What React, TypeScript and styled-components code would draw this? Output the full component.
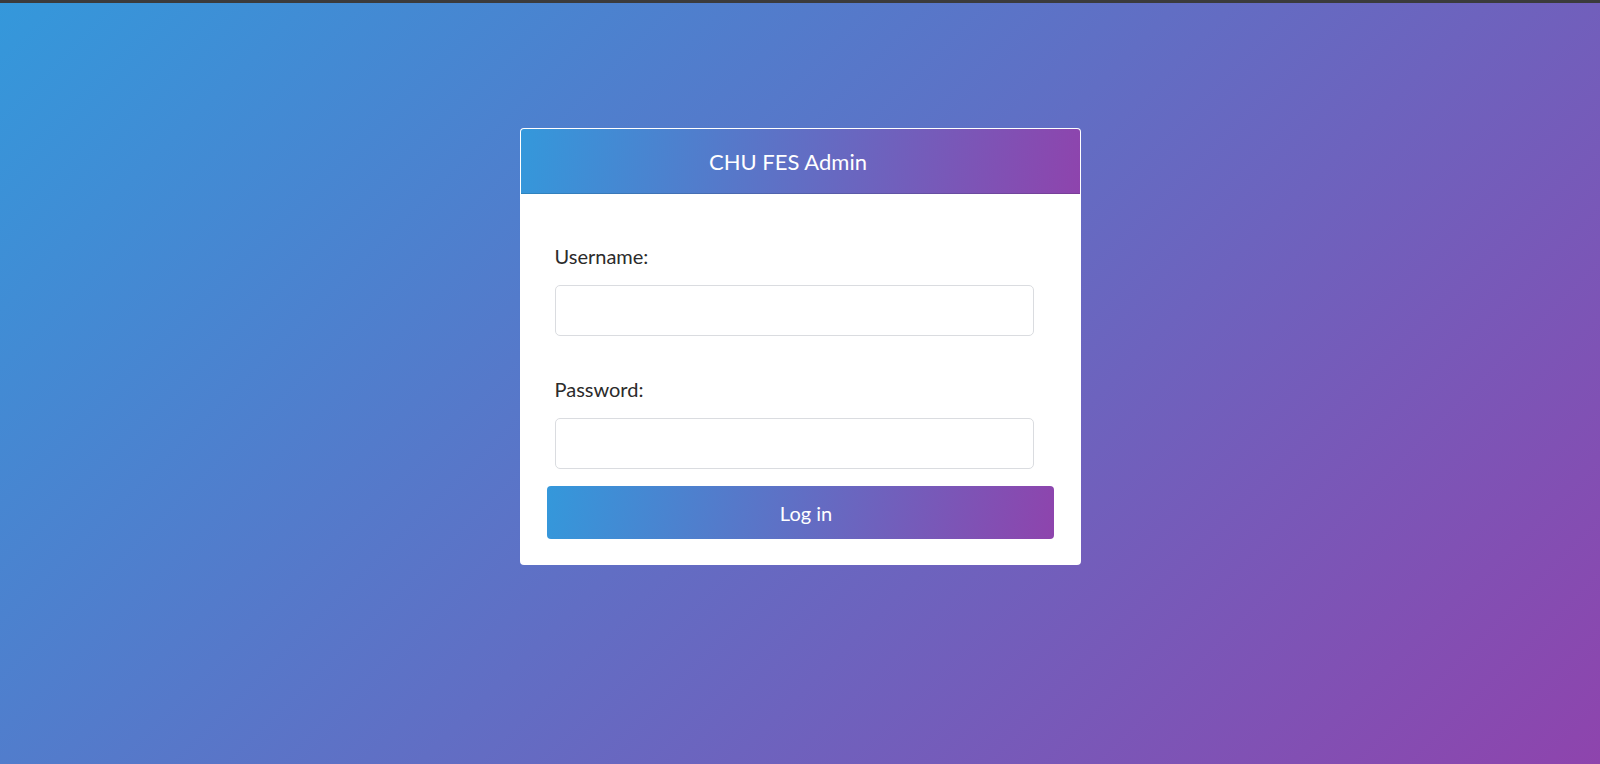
import React, { FC, useState } from 'react';
import styled, { createGlobalStyle } from 'styled-components';

const color = {
    blue: '#3498db',
    purple: '#8e44ad',
    light: '#ffffff',
    text: '#2b2b2b',
    border: '#dadce0',
    strip: '#3b3b3c',
};

const GlobalStyle = createGlobalStyle`
    * {
        box-sizing: border-box;
    }
    html, body {
        margin: 0;
        padding: 0;
        height: 100%;
    }
    body {
        font-family: Lato, 'Liberation Sans', sans-serif;
        color: ${color.text};
    }
`;

const Page = styled.div`
    min-height: 764px;
    display: flex;
    flex-direction: column;
    background: linear-gradient(135deg, ${color.blue}, ${color.purple});
`;

const TopStrip = styled.div`
    height: 3px;
    background-color: ${color.strip};
`;

const Center = styled.main`
    display: flex;
    justify-content: center;
    padding-top: 125px;
`;

const Card = styled.section`
    width: 561px;
    background-color: ${color.light};
    border: 1px solid rgba(255, 255, 255, 0.9);
    border-radius: 4px;
    overflow: hidden;
`;

const CardHeader = styled.header`
    height: 65px;
    display: flex;
    align-items: center;
    justify-content: center;
    padding-right: 24px;
    background: linear-gradient(100deg, ${color.blue}, ${color.purple});
    border-bottom: 1px solid rgba(0, 0, 0, 0.125);
`;

const CardTitle = styled.h1`
    margin: 0;
    font-size: 22px;
    font-weight: 400;
    color: ${color.light};
`;

const CardBody = styled.form`
    display: flex;
    flex-direction: column;
    padding: 50px 26px 25px;
`;

const FieldGroup = styled.div<{ $last?: boolean }>`
    display: flex;
    flex-direction: column;
    gap: 17px;
    margin: 0 20px ${(p) => (p.$last ? 17 : 41)}px 8px;
`;

const Label = styled.label`
    font-size: 20px;
    line-height: 24px;
    color: ${color.text};
`;

const Input = styled.input`
    height: 51px;
    width: 100%;
    padding: 0 14px;
    font-size: 20px;
    font-family: inherit;
    border: 1px solid ${color.border};
    border-radius: 5px;
    background-color: ${color.light};
    outline: none;
`;

const SubmitButton = styled.button`
    height: 53px;
    width: 100%;
    padding: 0 0 0 12px;
    border: none;
    border-radius: 4px;
    background: linear-gradient(100deg, ${color.blue}, ${color.purple});
    color: ${color.light};
    font-family: inherit;
    font-size: 20px;
    cursor: pointer;
`;

const App: FC = (): JSX.Element => {
    const [username, setUsername] = useState<string>('');
    const [password, setPassword] = useState<string>('');

    return (
        <>
            <GlobalStyle />
            <Page>
                <TopStrip />
                <Center>
                    <Card>
                        <CardHeader>
                            <CardTitle>CHU FES Admin</CardTitle>
                        </CardHeader>
                        <CardBody onSubmit={(e) => e.preventDefault()}>
                            <FieldGroup>
                                <Label htmlFor="username">Username:</Label>
                                <Input
                                    id="username"
                                    value={username}
                                    onChange={(e) => setUsername(e.target.value)}
                                />
                            </FieldGroup>
                            <FieldGroup $last>
                                <Label htmlFor="password">Password:</Label>
                                <Input
                                    id="password"
                                    type="password"
                                    value={password}
                                    onChange={(e) => setPassword(e.target.value)}
                                />
                            </FieldGroup>
                            <SubmitButton type="submit">Log in</SubmitButton>
                        </CardBody>
                    </Card>
                </Center>
            </Page>
        </>
    );
};

export default App;
